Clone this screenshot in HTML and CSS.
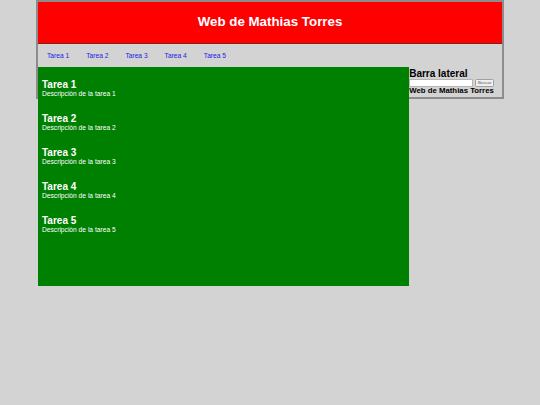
FILE: index.html
```html
<!DOCTYPE html>
<html lang="es">
<head>
<meta charset="utf-8">
<title>Web de Mathias Torres</title>
<link rel="stylesheet" href="styles.css">
</head>
<body>
<div class="container">
  <header class="header"><h1 class="title">Web de Mathias Torres</h1></header>
  <nav class="nav">
    <a class="nav-link" href="#">Tarea 1</a>
    <a class="nav-link" href="#">Tarea 2</a>
    <a class="nav-link" href="#">Tarea 3</a>
    <a class="nav-link" href="#">Tarea 4</a>
    <a class="nav-link" href="#">Tarea 5</a>
  </nav>
  <main class="main">
    <section class="task"><h2 class="task-title">Tarea 1</h2><p class="task-desc">Descripción de la tarea 1</p></section>
    <section class="task"><h2 class="task-title">Tarea 2</h2><p class="task-desc">Descripción de la tarea 2</p></section>
    <section class="task"><h2 class="task-title">Tarea 3</h2><p class="task-desc">Descripción de la tarea 3</p></section>
    <section class="task"><h2 class="task-title">Tarea 4</h2><p class="task-desc">Descripción de la tarea 4</p></section>
    <section class="task"><h2 class="task-title">Tarea 5</h2><p class="task-desc">Descripción de la tarea 5</p></section>
  </main>
  <aside class="sidebar">
    <h3 class="side-title">Barra lateral</h3>
    <form class="search">
      <input class="search-input" type="text">
      <button class="search-btn" type="button">Buscar</button>
    </form>
    <p class="side-text">Web de Mathias Torres</p>
  </aside>
</div>
</body>
</html>
```
FILE: styles.css
```css
* { box-sizing: border-box; }
body {
  margin: 0;
  background: #d3d3d3;
  font-family: "Liberation Sans", Arial, sans-serif;
}
.container {
  width: 468px;
  margin: 0 auto;
  border: 2px solid #8c8c8c;
}
.header {
  height: 42px;
  background: #ff0000;
  border-bottom: 1px solid #7f1f1f;
  display: flex;
  align-items: center;
  justify-content: center;
  padding-bottom: 2px;
}
.title {
  margin: 0;
  color: #ffffff;
  font-size: 13.33px;
  font-weight: bold;
}
.nav {
  height: 23px;
  display: flex;
  align-items: center;
  gap: 17px;
  padding: 0 0 1px 9px;
}
.nav-link {
  color: #1a1ae6;
  font-size: 6.67px;
  text-decoration: none;
}
.main {
  float: left;
  width: 80%;
  height: 219px;
  background: #008000;
  padding: 11.5px 4px;
  color: #ffffff;
}
.task { margin-bottom: 15px; }
.task-title {
  margin: 0;
  font-size: 10px;
  line-height: 11px;
  font-weight: bold;
}
.task-desc {
  margin: 0;
  font-size: 6.67px;
  line-height: 8px;
}
.sidebar {
  margin-left: 80%;
  color: #000;
}
.side-title {
  margin: 0;
  padding-top: 0.5px;
  font-size: 10px;
  line-height: 11.2px;
  font-weight: bold;
}
.search {
  margin: 0;
  height: 8.5px;
  display: flex;
  align-items: center;
  gap: 2px;
}
.search-input {
  width: 64px;
  height: 8px;
  margin: 0;
  padding: 0;
  border: 1px solid #b5b5b5;
  background: #fff;
}
.search-btn {
  width: 19px;
  height: 7.5px;
  margin: 0;
  padding: 0;
  border: 0.5px solid #a0a0a0;
  border-radius: 1.5px;
  background: #efefef;
  color: #555;
  font-family: "Liberation Sans", Arial, sans-serif;
  font-size: 4.3px;
  line-height: 6px;
}
.side-text {
  margin: 0;
  font-size: 7.8px;
  line-height: 8px;
  font-weight: bold;
  padding-bottom: 1.5px;
}
```
